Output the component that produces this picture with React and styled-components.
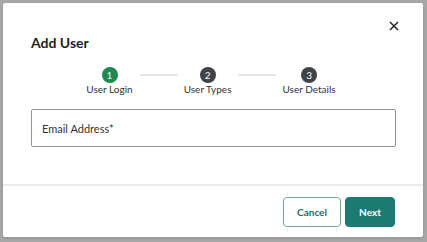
import React from "react";
import styled, { createGlobalStyle } from "styled-components";

const steps = [
  { n: 1, label: "User Login" },
  { n: 2, label: "User Types" },
  { n: 3, label: "User Details" }
];

const Global = createGlobalStyle`
  html, body {
    margin: 0;
    padding: 0;
    background: #a7a7a7;
    font-family: "Lato", "Liberation Sans", sans-serif;
  }
  * { box-sizing: border-box; }
`;

const Page = styled.div`
  width: 427px;
  height: 242px;
  padding: 3px 4px 5px 3px;
  overflow: hidden;
`;

const Modal = styled.div`
  width: 420px;
  height: 234px;
  background: #fff;
  border-radius: 2px;
  display: flex;
  flex-direction: column;
  box-shadow: 0 1px 3px rgba(0, 0, 0, 0.15);
`;

const Body = styled.div`
  flex: 1;
  padding: 0 27px 0 28px;
`;

const Header = styled.div`
  display: flex;
  justify-content: space-between;
  align-items: flex-start;
  padding: 15px 0 0 0;
  margin-right: -6px;
`;

const Title = styled.h2`
  margin: 16px 0 0 0;
  font-size: 14px;
  line-height: 18px;
  font-weight: 700;
  color: #1f1f1f;
`;

const Close = styled.button`
  width: 16px;
  height: 16px;
  padding: 0;
  border: 0;
  background: none;
  display: flex;
  align-items: center;
  justify-content: center;
  cursor: pointer;
`;

const Stepper = styled.div`
  display: flex;
  justify-content: center;
  align-items: flex-start;
  margin-top: 15px;
  padding-right: 5px;
`;

const Step = styled.div`
  display: flex;
  flex-direction: column;
  align-items: center;
`;

const Circle = styled.div`
  width: 16px;
  height: 16px;
  border-radius: 50%;
  background: ${p => (p.active ? "#1f8a50" : "#3f434a")};
  color: #fff;
  font-size: 10px;
  line-height: 16px;
  text-align: center;
`;

const Label = styled.div`
  font-size: 10px;
  line-height: 12px;
  color: #333;
  white-space: nowrap;
`;

const Connector = styled.div`
  width: 38px;
  height: 2px;
  background: #e6e6e6;
  margin: 7px 6px 0 7px;
`;

const Field = styled.div`
  margin-top: 14px;
  height: 38px;
  border: 1px solid #8f959c;
  border-radius: 2px;
  display: flex;
  align-items: center;
  padding: 0 10px;
  font-size: 11px;
  color: #333;
`;

const Footer = styled.div`
  border-top: 2px solid #ebebeb;
  padding: 11px 28px 10px 0;
  display: flex;
  justify-content: flex-end;
  gap: 4px;
`;

const Button = styled.button`
  height: 30px;
  width: ${p => (p.primary ? "50px" : "58px")};
  border-radius: 4px;
  border: 1px solid ${p => (p.primary ? "#1c7a73" : "#6fa9a4")};
  background: ${p => (p.primary ? "#1c7a73" : "#fff")};
  color: ${p => (p.primary ? "#fff" : "#1d6e69")};
  font-family: "Lato", "Liberation Sans", sans-serif;
  font-size: 10px;
  font-weight: 700;
  padding: 0;
  cursor: pointer;
`;

export default function App() {
  return (
    <Page>
      <Global />
      <Modal>
        <Body>
          <Header>
            <Title>Add User</Title>
            <Close aria-label="Close">
              <svg width="10" height="10" viewBox="0 0 10 10">
                <path d="M1 1L9 9M9 1L1 9" stroke="#222" strokeWidth="1.5" />
              </svg>
            </Close>
          </Header>
          <Stepper>
            {steps.map((s, i) => (
              <React.Fragment key={s.n}>
                {i > 0 && <Connector />}
                <Step>
                  <Circle active={i === 0}>{s.n}</Circle>
                  <Label>{s.label}</Label>
                </Step>
              </React.Fragment>
            ))}
          </Stepper>
          <Field>Email Address*</Field>
        </Body>
        <Footer>
          <Button>Cancel</Button>
          <Button primary>Next</Button>
        </Footer>
      </Modal>
    </Page>
  );
}
